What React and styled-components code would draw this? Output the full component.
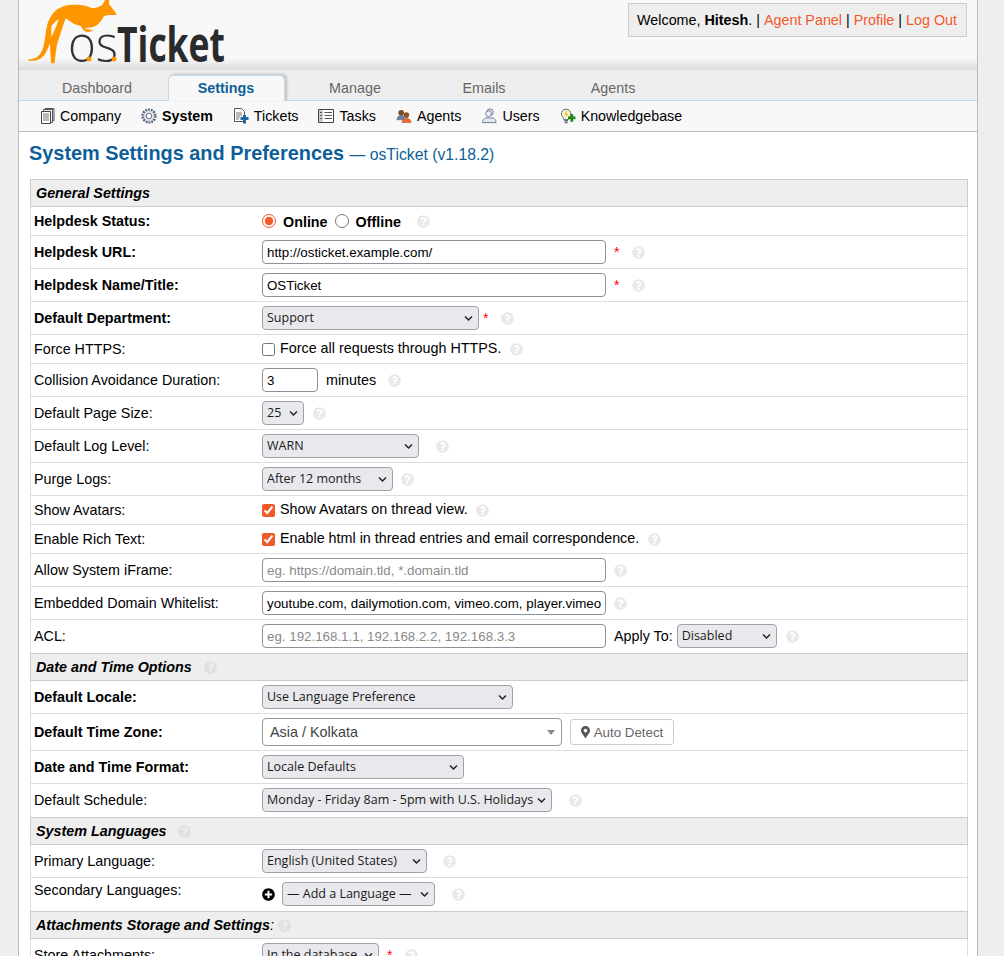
import styled, { createGlobalStyle } from "styled-components";
import { FaQuestionCircle, FaMapMarkerAlt, FaPlusCircle } from "react-icons/fa";

const GlobalStyle = createGlobalStyle`
  html, body {
    margin: 0;
    height: 956px;
    overflow: hidden;
    background: #eeeeee;
    font-family: "Liberation Sans", Arial, sans-serif;
    font-size: 14.33px;
    color: #000;
  }
`;

const Container = styled.div`
  width: 958px;
  margin-left: 18px;
  background: #fff;
  border-left: 1px solid #bbb;
  border-right: 1px solid #bbb;
`;

const Header = styled.div`
  height: 69px;
  display: flex;
  justify-content: space-between;
  align-items: flex-start;
  padding-left: 1px;
  padding-right: 10px;
  background: linear-gradient(#f8f8f8 84%, #dedede);
`;

const LogoSvg = styled.svg`
  display: block;
  overflow: visible;
`;

const Welcome = styled.div`
  margin-top: 3px;
  height: 32px;
  padding: 0 9px 0 8px;
  display: flex;
  align-items: center;
  white-space: pre;
  background: #eee;
  border: 1px solid #ccc;
`;

const TopLink = styled.a`
  color: #f4592b;
`;

const Nav = styled.div`
  height: 30px;
  padding-left: 20px;
  display: flex;
  align-items: flex-end;
  gap: 12px;
  background: #eee;
  border-top: 1px solid #ddd;
  border-bottom: 1px solid #c0daf0;
`;

const Tab = styled.div`
  width: 117px;
  height: 26px;
  margin-bottom: -1px;
  padding: 0 1px 1px 0;
  display: flex;
  align-items: center;
  justify-content: center;
  box-sizing: border-box;
  border: 1px solid ${(p) => (p.$active ? "#c0daf0" : "transparent")};
  border-bottom: none;
  border-radius: 5px 5px 0 0;
  background: ${(p) => (p.$active ? "#f8f8f8" : "transparent")};
  box-shadow: ${(p) => (p.$active ? "2px -1px 3px rgba(0,0,0,0.2)" : "none")};
  color: ${(p) => (p.$active ? "#0e5f99" : "#666")};
  font-weight: ${(p) => (p.$active ? "bold" : "normal")};
`;

const SubNav = styled.div`
  height: 30px;
  padding-left: 20px;
  display: flex;
  align-items: center;
  gap: 20px;
  background: #f8f8f8;
  border-bottom: 1px solid #bbb;
  font-size: 14.27px;
`;

const SubItem = styled.div`
  display: flex;
  align-items: center;
  gap: 5px;
  font-weight: ${(p) => (p.$active ? "bold" : "normal")};
`;

const Content = styled.div`
  padding: 9px 9px 0 10px;
  background: #fff;
`;

const Title = styled.h2`
  margin: 0 0 12px;
  line-height: 24px;
  font-size: 19.9px;
  font-weight: bold;
  color: #0e5f99;
`;

const Version = styled.small`
  font-size: 15.75px;
  font-weight: normal;
`;

const Settings = styled.div`
  margin-left: 1px;
`;

const HelpIcon = styled(FaQuestionCircle)`
  flex: none;
  width: 13px;
  height: 13px;
  margin-left: ${(p) => p.$gap}px;
  color: #e9e9e9;
`;

const SectionHead = styled.div`
  height: 26px;
  padding-left: 5px;
  display: flex;
  align-items: center;
  background: #eee;
  border: 1px solid #ccc;
  font-weight: bold;
  font-style: italic;
  ${HelpIcon} {
    color: #e0e0e0;
  }
`;

const Colon = styled.span`
  font-weight: normal;
`;

const Row = styled.div`
  display: grid;
  grid-template-columns: 228px 1fr;
  padding: 4px 3px;
  border-left: 1px solid #ddd;
  border-right: 1px solid #ddd;
  border-bottom: 1px solid #ddd;
  &:has(+ ${SectionHead}) {
    border-bottom: none;
    padding-bottom: 5px;
  }
`;

const Label = styled.label`
  align-self: ${(p) => (p.$top ? "start" : "center")};
  font-weight: ${(p) => (p.$req ? "bold" : "normal")};
  line-height: 16px;
`;

const Field = styled.div`
  display: flex;
  align-items: center;
  line-height: 20px;
  min-height: 20px;
`;

const Input = styled.input`
  box-sizing: border-box;
  width: ${(p) => p.$w || 344}px;
  height: 24px;
  padding: 0 4px;
  background: #fff;
  border: 1px solid #8f8f9d;
  border-radius: 4px;
  font-family: "Liberation Sans", Arial, sans-serif;
  font-size: 13.33px;
  color: #000;
  &::placeholder {
    color: #8a8a8a;
  }
`;

const SelectWrap = styled.div`
  position: relative;
  width: ${(p) => p.$w}px;
  height: 24px;
`;

const NativeSelect = styled.select`
  appearance: none;
  box-sizing: border-box;
  width: 100%;
  height: 100%;
  padding: 0 0 2px 4px;
  background: #e9e9ed;
  border: 1px solid #a0a0aa;
  border-radius: 4px;
  font-family: "Open Sans", sans-serif;
  font-size: 12.5px;
  color: #1a1a1a;
`;

const Chevron = styled.svg`
  position: absolute;
  right: 6px;
  top: 9px;
  width: 9px;
  height: 7px;
  pointer-events: none;
`;

const Check = styled.input`
  width: 13px;
  height: 13px;
  margin: 0 5px 0 0;
  accent-color: #ee5a28;
`;

const CheckText = styled.span`
  margin-top: -2px;
`;

const Radio = styled.input`
  width: 14px;
  height: 14px;
  margin: 0 7px 0 0;
  accent-color: #ee5a28;
`;

const Choice = styled.span`
  padding-top: 2px;
  line-height: 18px;
  font-weight: bold;
  margin-right: ${(p) => p.$mr || 0}px;
`;

const Star = styled.span`
  margin-left: ${(p) => p.$ml}px;
  color: #f00;
  font-size: 14px;
  line-height: 14px;
`;

const Suffix = styled.span`
  margin: 0 ${(p) => p.$mr || 0}px 0 ${(p) => p.$ml || 0}px;
`;

const ComboBox = styled.div`
  box-sizing: border-box;
  width: 300px;
  height: 28px;
  padding: 0 6px 0 7px;
  display: flex;
  align-items: center;
  justify-content: space-between;
  border: 1px solid #999;
  border-radius: 4px;
  font-size: 14.4px;
  color: #444;
`;

const ComboArrow = styled.span`
  border-top: 5px solid #888;
  border-left: 4px solid transparent;
  border-right: 4px solid transparent;
`;

const DetectButton = styled.button`
  box-sizing: border-box;
  width: 104px;
  height: 26px;
  margin-left: 8px;
  padding: 0;
  display: flex;
  align-items: center;
  justify-content: center;
  gap: 4px;
  background: #fff;
  border: 1px solid #ccc;
  border-radius: 3px;
  font-family: "Liberation Sans", Arial, sans-serif;
  font-size: 13.33px;
  color: #666;
  svg {
    width: 9px;
    height: 12px;
    color: #555;
  }
`;

const AddIcon = styled(FaPlusCircle)`
  width: 13px;
  height: 13px;
  margin-right: 7px;
  color: #000;
`;

const Select = ({ w, value }) => (
  <SelectWrap $w={w}>
    <NativeSelect defaultValue={value}>
      <option>{value}</option>
    </NativeSelect>
    <Chevron viewBox="0 0 9 7">
      <path d="M1 1.5 L4.5 5 L8 1.5" fill="none" stroke="#222" strokeWidth="1.5" />
    </Chevron>
  </SelectWrap>
);

const Logo = () => (
  <LogoSvg width="215" height="69" viewBox="0 0 215 69">
    <path
      fill="#ff9600"
      fillRule="evenodd"
      d="M8 59.500 C12 59.500 15 58.500 17.300 56.700 C20.500 54 22.500 51 23.300 46.700 C24.500 42 25 38 25.700 33.300 C26.500 28 27 24 29 20 C31 15.500 33.500 12 37.300 9.300 C41 7 45 5.500 49 5 C53 4.500 57 4.500 60.700 5 C65 5.500 69 7 72.300 8.300 C76 8 79.500 7 82.300 5 L85 0 L89 0 L89 4 L95.700 12.700 L96.700 15 L89 15 L84 16 C82.500 19 81 21.500 79 23.300 C77 25.500 75 26.500 72.300 27.300 L64 28.300 L74 30.700 L67.300 32.300 L63.300 30 L60.700 26 L54 24 L45.700 18.300 L43.300 25 C41 32 39 38 37.300 43.300 C36 50 35.200 57 34.700 63.300 L31.300 63.300 C30.500 56 30 50 30 43.300 C29 46 28 48 27 50 C25.500 54 23 58 17 60 C14 61 11 61 8 60.500 Z M39 19 C37 25 34 31 31.500 37 C31.200 33 31.200 29 31.500 26 C33.500 23 36 21 39 19 Z"
    />
    <text x="48" y="62" fontFamily="'Open Sans', sans-serif" fontWeight="300" fontSize="50" fill="#333" textLength="50" lengthAdjust="spacingAndGlyphs">os</text>
    <circle cx="69" cy="59" r="2.500" fill="#ff9600" />
    <circle cx="94" cy="59" r="2.500" fill="#ff9600" />
    <text x="97" y="62" fontFamily="'Open Sans', sans-serif" fontWeight="700" fontSize="49" fill="#282a2c" textLength="108" lengthAdjust="spacingAndGlyphs">Ticket</text>
  </LogoSvg>
);

const CompanyIcon = () => (
  <svg width="16" height="16" viewBox="0 0 16 16">
    <path d="M6 .5h9v12H6z" fill="#eee" stroke="#555" />
    <path d="M4.500 1.500h9v13h-9z" fill="#f4f4f4" stroke="#555" />
    <path d="M2.500 3.500h9v12h-9z" fill="#fff" stroke="#444" />
    <path d="M4 6h6M4 8h6M4 10h6M4 12h6" stroke="#777" />
  </svg>
);

const GearIcon = () => (
  <svg width="16" height="16" viewBox="0 0 16 16">
    <circle cx="8" cy="8" r="6.300" fill="#e8ecf2" stroke="#55607a" strokeWidth="2.600" strokeDasharray="1.800 1" />
    <circle cx="8" cy="8" r="5" fill="none" stroke="#c8cedb" />
    <circle cx="8" cy="8" r="2.800" fill="#fff" stroke="#667089" />
  </svg>
);

const TicketIcon = () => (
  <svg width="16" height="16" viewBox="0 0 16 16">
    <path d="M1.500.5h7l3 3v10h-10z" fill="#fff" stroke="#555" />
    <path d="M3 5h6M3 7h6M3 9h4M3 11h3" stroke="#777" />
    <path d="M10 7h3v2h2.500v3H13v3.500h-3V12H7.500V9H10z" fill="#1f6aa5" />
  </svg>
);

const TaskIcon = () => (
  <svg width="16" height="16" viewBox="0 0 16 16">
    <path d="M.5 1.500h15v13H.5z" fill="#fff" stroke="#444" />
    <path d="M1 2h4v12H1z" fill="#ccc" />
    <path d="M2 4.500h2M2 7.500h2M2 10.500h2M6.500 4.500h7.500M6.500 7.500h7.500M6.500 10.500h7.500" stroke="#555" />
  </svg>
);

const AgentsIcon = () => (
  <svg width="16" height="16" viewBox="0 0 17 16">
    <circle cx="5.500" cy="4.500" r="3" fill="#7a4a22" />
    <path d="M1 12c0-3 2-4.500 4.500-4.500S9 9 9 12z" fill="#5f84a8" stroke="#4a5a6a" strokeWidth=".5" />
    <circle cx="11" cy="7" r="3" fill="#8a5028" />
    <path d="M6.500 15c0-3 2-4.500 4.500-4.500s5 1.500 5 4.500z" fill="#ec6a2a" stroke="#a33" strokeWidth=".5" />
  </svg>
);

const UsersIcon = () => (
  <svg width="16" height="16" viewBox="0 0 17 16">
    <circle cx="9.500" cy="4" r="3.500" fill="#dde2ea" stroke="#6b7a92" />
    <path d="M1.500 15c0-3 2-4 3.500-5h8c1.500 1 3 2 3 5z" fill="#e4e8ee" stroke="#6b7a92" />
    <circle cx="8" cy="5.500" r="3" fill="#f2f4f7" stroke="#6b7a92" />
  </svg>
);

const BulbIcon = () => (
  <svg width="16" height="16" viewBox="0 0 17 16">
    <path d="M6.500 .7a5 5 0 0 1 3 9l-.5 2H4l-.500-2a5 5 0 0 1 3-9z" fill="#fdf7c8" stroke="#5a6a80" />
    <path d="M7 3 5.500 6H8L6.500 8.500" fill="none" stroke="#e8a010" />
    <path d="M4.500 13h4M5 15h3" stroke="#5a6a80" strokeWidth="1.500" />
    <path d="M11 6h3v2.500h2.500v3H14V14h-3v-2.500H8.500v-3H11z" fill="#1d8a1d" />
  </svg>
);

const subItems = [
  { label: "Company", Icon: CompanyIcon },
  { label: "System", Icon: GearIcon, active: true },
  { label: "Tickets", Icon: TicketIcon },
  { label: "Tasks", Icon: TaskIcon },
  { label: "Agents", Icon: AgentsIcon },
  { label: "Users", Icon: UsersIcon },
  { label: "Knowledgebase", Icon: BulbIcon },
];

const App = () => (
  <>
    <GlobalStyle />
    <Container>
      <Header>
        <Logo />
        <Welcome>
          Welcome, <b>Hitesh</b>. | <TopLink>Agent Panel</TopLink> | <TopLink>Profile</TopLink> | <TopLink>Log Out</TopLink>
        </Welcome>
      </Header>
      <Nav>
        <Tab>Dashboard</Tab>
        <Tab $active>Settings</Tab>
        <Tab>Manage</Tab>
        <Tab>Emails</Tab>
        <Tab>Agents</Tab>
      </Nav>
      <SubNav>
        {subItems.map(({ label, Icon, active }) => (
          <SubItem key={label} $active={active}>
            <Icon />
            {label}
          </SubItem>
        ))}
      </SubNav>
      <Content>
        <Title>
          System Settings and Preferences <Version>— osTicket (v1.18.2)</Version>
        </Title>
        <Settings>
          <SectionHead>General Settings</SectionHead>
          <Row>
            <Label $req>Helpdesk Status:</Label>
            <Field>
              <Radio type="radio" name="status" defaultChecked />
              <Choice $mr={7}>Online</Choice>
              <Radio type="radio" name="status" />
              <Choice>Offline</Choice>
              <HelpIcon $gap={16} />
            </Field>
          </Row>
          <Row>
            <Label $req>Helpdesk URL:</Label>
            <Field>
              <Input defaultValue="http://osticket.example.com/" />
              <Star $ml={8}>*</Star>
              <HelpIcon $gap={13} />
            </Field>
          </Row>
          <Row>
            <Label $req>Helpdesk Name/Title:</Label>
            <Field>
              <Input defaultValue="OSTicket" />
              <Star $ml={8}>*</Star>
              <HelpIcon $gap={13} />
            </Field>
          </Row>
          <Row>
            <Label $req>Default Department:</Label>
            <Field>
              <Select w={217} value="Support" />
              <Star $ml={4}>*</Star>
              <HelpIcon $gap={13} />
            </Field>
          </Row>
          <Row>
            <Label>Force HTTPS:</Label>
            <Field>
              <Check type="checkbox" />
              <CheckText>Force all requests through HTTPS.</CheckText>
              <HelpIcon $gap={9} />
            </Field>
          </Row>
          <Row>
            <Label>Collision Avoidance Duration:</Label>
            <Field>
              <Input $w={56} defaultValue="3" />
              <Suffix $ml={8}>minutes</Suffix>
              <HelpIcon $gap={12} />
            </Field>
          </Row>
          <Row>
            <Label>Default Page Size:</Label>
            <Field>
              <Select w={42} value="25" />
              <HelpIcon $gap={9} />
            </Field>
          </Row>
          <Row>
            <Label>Default Log Level:</Label>
            <Field>
              <Select w={157} value="WARN" />
              <HelpIcon $gap={17} />
            </Field>
          </Row>
          <Row>
            <Label>Purge Logs:</Label>
            <Field>
              <Select w={131} value="After 12 months" />
              <HelpIcon $gap={8} />
            </Field>
          </Row>
          <Row>
            <Label>Show Avatars:</Label>
            <Field>
              <Check type="checkbox" defaultChecked />
              <CheckText>Show Avatars on thread view.</CheckText>
              <HelpIcon $gap={8} />
            </Field>
          </Row>
          <Row>
            <Label>Enable Rich Text:</Label>
            <Field>
              <Check type="checkbox" defaultChecked />
              <CheckText>Enable html in thread entries and email correspondence.</CheckText>
              <HelpIcon $gap={9} />
            </Field>
          </Row>
          <Row>
            <Label>Allow System iFrame:</Label>
            <Field>
              <Input placeholder="eg. https://domain.tld, *.domain.tld" />
              <HelpIcon $gap={8} />
            </Field>
          </Row>
          <Row>
            <Label>Embedded Domain Whitelist:</Label>
            <Field>
              <Input defaultValue="youtube.com, dailymotion.com, vimeo.com, player.vimeo.com, web.microsoftstream.com" />
              <HelpIcon $gap={8} />
            </Field>
          </Row>
          <Row>
            <Label>ACL:</Label>
            <Field>
              <Input placeholder="eg. 192.168.1.1, 192.168.2.2, 192.168.3.3" />
              <Suffix $ml={8} $mr={4}>Apply To:</Suffix>
              <Select w={100} value="Disabled" />
              <HelpIcon $gap={9} />
            </Field>
          </Row>
          <SectionHead>
            Date and Time Options
            <HelpIcon $gap={12} />
          </SectionHead>
          <Row>
            <Label $req>Default Locale:</Label>
            <Field>
              <Select w={251} value="Use Language Preference" />
            </Field>
          </Row>
          <Row>
            <Label $req>Default Time Zone:</Label>
            <Field>
              <ComboBox>
                Asia / Kolkata
                <ComboArrow />
              </ComboBox>
              <DetectButton>
                <FaMapMarkerAlt />
                Auto Detect
              </DetectButton>
            </Field>
          </Row>
          <Row>
            <Label $req>Date and Time Format:</Label>
            <Field>
              <Select w={202} value="Locale Defaults" />
            </Field>
          </Row>
          <Row>
            <Label>Default Schedule:</Label>
            <Field>
              <Select w={290} value="Monday - Friday 8am - 5pm with U.S. Holidays" />
              <HelpIcon $gap={17} />
            </Field>
          </Row>
          <SectionHead>
            System Languages
            <HelpIcon $gap={11} />
          </SectionHead>
          <Row>
            <Label>Primary Language:</Label>
            <Field>
              <Select w={165} value="English (United States)" />
              <HelpIcon $gap={16} />
            </Field>
          </Row>
          <Row>
            <Label $top>Secondary Languages:</Label>
            <Field>
              <AddIcon />
              <Select w={153} value="— Add a Language —" />
              <HelpIcon $gap={17} />
            </Field>
          </Row>
          <SectionHead>
            <span>
              Attachments Storage and Settings<Colon>:</Colon>
            </span>
            <HelpIcon $gap={4} />
          </SectionHead>
          <Row>
            <Label>Store Attachments:</Label>
            <Field>
              <Select w={117} value="In the database" />
              <Star $ml={8}>*</Star>
              <HelpIcon $gap={13} />
            </Field>
          </Row>
        </Settings>
      </Content>
    </Container>
  </>
);

export default App;
